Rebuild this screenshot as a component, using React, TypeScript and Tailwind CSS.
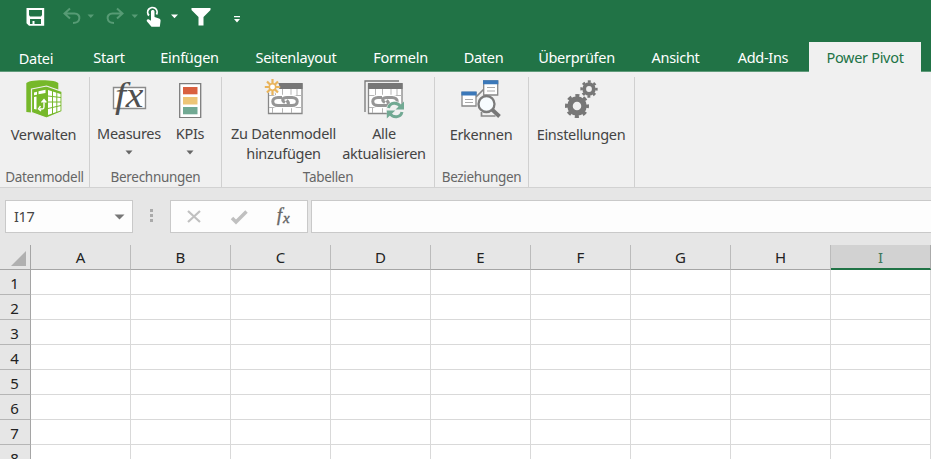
import type { ReactNode } from "react";

const tabs: [string, string][] = [
  ["Datei", "w-[72px] pt-px"],
  ["Start", "ml-1 w-[66px] tracking-[-0.2px]"],
  ["Einfügen", "w-[95px]"],
  ["Seitenlayout", "w-[118px]"],
  ["Formeln", "w-[91px]"],
  ["Daten", "w-[75px]"],
  ["Überprüfen", "w-[111px]"],
  ["Ansicht", "w-[87px]"],
  ["Add-Ins", "w-[88px]"],
];

const columns = ["A", "B", "C", "D", "E", "F", "G", "H", "I"];
const rows = [1, 2, 3, 4, 5, 6, 7, 8];

function QuickAccess() {
  return (
    <svg className="block" width="931" height="42" viewBox="0 0 931 42">
      <path fill="#fff" fillRule="evenodd" d="M26.5 8h17.7v17.7H29l-2.5-2.5zM29 10v5l1 1.5h11l1-1.5v-5zM30 19v5h2.5v-3h2v3H41v-5z" />
      <g fill="none" stroke="#579b75" strokeWidth="2">
        <path d="M70 8.5l-5.5 5 5.5 5M65 13.5h9.5c7 0 6.500 9.500-1.500 9.500" />
        <path d="M117 8.500l5.500 5-5.500 5M122 13.500h-9.500c-7 0-6.500 9.500 1.500 9.500" />
      </g>
      <path fill="#579b75" d="M87.500 14.500h6.500l-3.200 3.500zM131.500 14.500h6.500l-3.200 3.500z" />
      <path fill="none" stroke="#fff" strokeWidth="1.800" d="M149 15.500a4.700 4.700 0 1 1 7.500-1" />
      <path fill="#fff" d="M151 11.500c0-2 3.500-2 3.500 0V17l4.500 1.500c1.500.500 1.800 1.500 1.500 3l-.700 5.200h-8.300l-4.500-5.200c-1-1.500.500-3 2-2l2 1.200z" />
      <path fill="#fff" d="M171 14.500h7l-3.500 3.800zM191.500 8h19v2l-7 7v8.500h-5V17l-7-7zM234 16h6v1.300h-6zM234 19h6l-3 3.500z" />
    </svg>
  );
}

function ManageIcon() {
  return (
    <svg width="38" height="40" viewBox="24 79 38 40">
      <path fill="#76b82a" d="M25.300 83.500c0-4.500 32-4.500 32 0V107l-12 7-20-2z" />
      <path fill="#76b82a" stroke="#f0f0f0" strokeWidth="1.200" d="M30.500 89l15-3 15.500 5.500v20l-15.500 6.500-15-5.500z" />
      <path fill="#fff" d="M33 92.500l3-.8v3l-3 .5zM37.500 91.300l7-1.500v3.300l-7 1.200zM33 97l2.500-.4v13l-2.500-.6zM47 90l12.500 4v16.500L47 115z" />
      <path stroke="#76b82a" strokeWidth="1" d="M47 96l13 1.500M47 102h13M47 108.500l13-3M51.500 91v23M55.800 92v20.500" />
      <path fill="none" stroke="#fff" strokeWidth="1.400" d="M39 109l3-.2c1-.2 1-1 1-2v-6M40.500 102.500l2.500-3 2.300 3M39.500 106l-2 2.800 2.500 2.200" />
    </svg>
  );
}

function MeasuresIcon() {
  return (
    <svg width="38" height="40" viewBox="110 78 38 40">
      <path fill="#fff" stroke="#8b8b8b" strokeWidth="1.400" d="M113.500 87.500h32v21h-32z" />
      <text x="115" y="107" fill="#505050" fontFamily="Liberation Serif, serif" fontStyle="italic" fontSize="36" textLength="28" lengthAdjust="spacingAndGlyphs">fx</text>
    </svg>
  );
}

function KpiIcon() {
  return (
    <svg width="24" height="40" viewBox="178 79 24 40">
      <path fill="#fff" stroke="#7c7c7c" strokeWidth="1.300" d="M179.700 84.700h21v34h-21z" />
      <path fill="#d9603f" d="M183 88h14.500v7.300H183z" />
      <path fill="#edc576" d="M183 98h14.500v7.500H183z" />
      <path fill="#71a993" d="M183 108h14.500v7.300H183z" />
    </svg>
  );
}

function LinkedTable() {
  return (
    <g>
      <path fill="#fff" stroke="#888" strokeWidth="1.300" d="M267.500 84h33.500v29.500h-33.500z" />
      <path fill="#777" d="M267 83h34.600v6H267z" />
      <path stroke="#b5b5b5" strokeWidth="1" d="M268 95.500h33M268 107.500h33M274.500 89v6M281.500 89v6M290 89v6M296 89v6M271.500 107v6M281.500 107v6M290.500 107v6" />
      <g fill="none" stroke="#fff" strokeWidth="5.500">
        <path d="M283 97.500h-6c-7 0-7 8 0 8h7c4 0 4.500-3 3-5M284 105.500h7c7 0 7-8 0-8h-6c-5 0-5 3-3 5" />
      </g>
      <g fill="none" stroke="#969696" strokeWidth="3">
        <path d="M281 97.500h-4c-7 0-7 8 0 8h7c4 0 4.500-3 1.500-5M284 105.500h7c7 0 7-8 0-8h-5c-5 0-5.500 3-2 5" />
      </g>
    </g>
  );
}

function AddTableIcon() {
  return (
    <svg width="40" height="40" viewBox="263 78 40 40">
      <LinkedTable />
      <circle cx="271.500" cy="87" r="7" fill="#f0f0f0" />
      <path stroke="#e9b45b" strokeWidth="2.200" d="M271.500 79v16M263.800 87h15.400M266 81.500l11 11M277 81.500l-11 11" />
      <circle cx="271.500" cy="87" r="3.200" fill="#fff" stroke="#e9b45b" strokeWidth="1.500" />
    </svg>
  );
}

function RefreshIcon() {
  return (
    <svg width="42" height="42" viewBox="363 78 42 42">
      <path fill="none" stroke="#777" strokeWidth="1.300" d="M365 112V81h34" />
      <g transform="translate(101 0)"><LinkedTable /></g>
      <circle cx="395" cy="110" r="9" fill="#f0f0f0" />
      <g fill="none" stroke="#71a993" strokeWidth="3">
        <path d="M388.500 108c1.500-6 9-6 12-1.500M402 112c-1.500 6-9 6-12 1.500" />
      </g>
      <path fill="#71a993" d="M404 101.500v8h-8.500zM386.800 118.500v-8h8.500z" />
    </svg>
  );
}

function DetectIcon() {
  return (
    <svg width="42" height="40" viewBox="461 79 42 40">
      <path fill="none" stroke="#888" strokeWidth="1.700" d="M477 97l8-8M482.500 112v4h14" />
      <path fill="#fff" stroke="#888" strokeWidth="1.300" d="M463 92.500h14v13.500h-14zM484.700 81h14v14h-14z" />
      <path fill="#3b78b9" d="M462.400 91.500h15.200v4h-15.200zM484 80.300h15.300v4H484z" />
      <path stroke="#aaa" strokeWidth="1" d="M466 99.500h8M466 102.500h8M488 87.500h8M488 91h8" />
      <circle cx="487.500" cy="104" r="8" fill="#f7fcff" stroke="#7c7c7c" strokeWidth="2.300" />
      <path stroke="#777" strokeWidth="3.800" d="M493 109.500l7.500 7" />
    </svg>
  );
}

function SettingsIcon() {
  return (
    <svg width="34" height="40" viewBox="564 79 34 40" fill="none" stroke="#777">
      <circle cx="577" cy="106" r="7" strokeWidth="5.500" />
      <circle cx="577" cy="106" r="10.500" strokeWidth="3" strokeDasharray="4.100 4.147" strokeDashoffset="2" />
      <circle cx="589" cy="89" r="4.800" strokeWidth="3.800" />
      <circle cx="589" cy="89" r="7.400" strokeWidth="2.500" strokeDasharray="2.900 2.912" strokeDashoffset="1.400" />
    </svg>
  );
}

function Command({ icon, lines, menu, className }: { icon: ReactNode; lines: string[]; menu?: boolean; className: string }) {
  return (
    <div className={`flex shrink-0 flex-col items-center ${className}`}>
      <div className="flex h-[45px]">{icon}</div>
      {lines.map((line) => (
        <span key={line} className="h-5 whitespace-nowrap leading-5">{line}</span>
      ))}
      {menu && <svg className="mt-[7px]" width="8" height="5" viewBox="0 0 8 5"><path fill="#666" d="M.5.5h7L4 4.500z" /></svg>}
    </div>
  );
}

function Group({ label, className, children }: { label: string; className: string; children?: ReactNode }) {
  return (
    <section className={`flex shrink-0 flex-col border-r border-[#d0d0d0] ${className}`}>
      <div className="flex h-[90px]">{children}</div>
      <div className="h-5 whitespace-nowrap text-center text-[13.500px] leading-5 text-[#666]">{label}</div>
    </section>
  );
}

export default function App() {
  return (
    <div className="h-[459px] w-[931px] overflow-hidden bg-[#e6e6e6] font-['Noto_Sans','Open_Sans',sans-serif] text-[14.500px] tracking-[-0.3px] text-[#444]">
      <header className="h-[72px] border-b border-[#5f9b7a] bg-[#217346]">
        <QuickAccess />
        <nav className="flex h-[30px] text-white">
          {tabs.map(([name, size]) => (
            <div key={name} className={`shrink-0 whitespace-nowrap text-center leading-[30px] ${size}`}>{name}</div>
          ))}
          <div className="ml-0.5 w-28 shrink-0 whitespace-nowrap bg-[#f0f0f0] text-center leading-[30px] text-[#217346]">Power Pivot</div>
        </nav>
      </header>

      <div className="flex h-[116px] border-b border-[#d2d2d2] bg-[#f0f0f0] pt-[5px]">
        <Group label="Datenmodell" className="w-[90px]">
          <Command className="w-[87px] pt-[2px]" icon={<ManageIcon />} lines={["Verwalten"]} />
        </Group>
        <Group label="Berechnungen" className="w-[132px]">
          <Command className="w-[78px] pt-[1px]" icon={<MeasuresIcon />} lines={["Measures"]} menu />
          <Command className="w-[44px] pt-[1px]" icon={<KpiIcon />} lines={["KPIs"]} menu />
        </Group>
        <Group label="Tabellen" className="w-[213px]">
          <Command className="ml-1.5 w-[111px] pt-[1px]" icon={<AddTableIcon />} lines={["Zu Datenmodell", "hinzufügen"]} />
          <Command className="w-[90px] pt-[1px]" icon={<RefreshIcon />} lines={["Alle", "aktualisieren"]} />
        </Group>
        <Group label="Beziehungen" className="w-[94px]">
          <Command className="w-[92px] pt-[2px]" icon={<DetectIcon />} lines={["Erkennen"]} />
        </Group>
        <Group label="" className="w-[106px]">
          <Command className="w-[104px] pt-[2px]" icon={<SettingsIcon />} lines={["Einstellungen"]} />
        </Group>
      </div>

      <div className="flex h-[57px] pl-[5px] pt-3">
        <div className="flex h-[33px] w-32 shrink-0 items-center justify-between border border-[#c9c9c9] bg-[#fdfdfd] pl-2 pr-[7px]">
          <span>I17</span>
          <svg width="11" height="6" viewBox="0 0 11 6"><path fill="#777" d="M.5.5h10l-5 5z" /></svg>
        </div>
        <svg className="ml-4 mt-[9px]" width="5" height="14" viewBox="0 0 5 14"><path fill="#aaa" d="M1 0h3v3H1zM1 5h3v3H1zM1 10h3v3H1z" /></svg>
        <svg className="ml-4 shrink-0 border border-[#c9c9c9] bg-[#fdfdfd]" width="138" height="33" viewBox="0 0 136 31">
          <path fill="none" stroke="#c0c0c0" strokeWidth="2.200" d="M17 10l12 11M29 10L17 21" />
          <path fill="none" stroke="#c0c0c0" strokeWidth="3.500" d="M61 17l4 4L75.500 10.500" />
          <text x="106" y="20" fill="#666" stroke="#666" strokeWidth=".4" fontFamily="Liberation Serif, serif" fontStyle="italic" fontSize="18">f</text>
          <text x="112" y="21.500" fill="#666" stroke="#666" strokeWidth=".4" fontFamily="Liberation Serif, serif" fontStyle="italic" fontSize="15">x</text>
        </svg>
        <div className="ml-[3px] h-[33px] grow border border-r-0 border-[#c9c9c9] bg-[#fdfdfd]" />
      </div>

      <main className="text-[15px] tracking-normal text-[#222]">
        <div className="flex h-[25px]">
          <div className="flex w-[31px] shrink-0 items-end justify-end border-b border-r border-[#a5a5a5] pb-[3px] pr-[4px]">
            <svg width="15" height="15" viewBox="0 0 15 15"><path fill="#b0b0b0" d="M15 0v15H0z" /></svg>
          </div>
          {columns.map((name) => (
            <div key={name} className={name === "I"
              ? "w-[100px] shrink-0 border-b-2 border-r border-[#217346] border-r-[#aaa] bg-[#d2d2d2] text-center leading-[25px] text-[#3b765b]"
              : "w-[100px] shrink-0 border-b border-r border-[#a5a5a5] border-r-[#bbb] text-center leading-[25px]"}>{name}</div>
          ))}
        </div>
        {rows.map((row) => (
          <div key={row} className="flex h-[25px]">
            <div className="w-[31px] shrink-0 border-b border-r border-[#b5b5b5] border-r-[#a5a5a5] pr-px text-center leading-[26px]">{row}</div>
            {columns.map((name) => (
              <div key={name} className="w-[100px] shrink-0 border-b border-r border-[#d9d9d9] bg-white" />
            ))}
          </div>
        ))}
      </main>
    </div>
  );
}
